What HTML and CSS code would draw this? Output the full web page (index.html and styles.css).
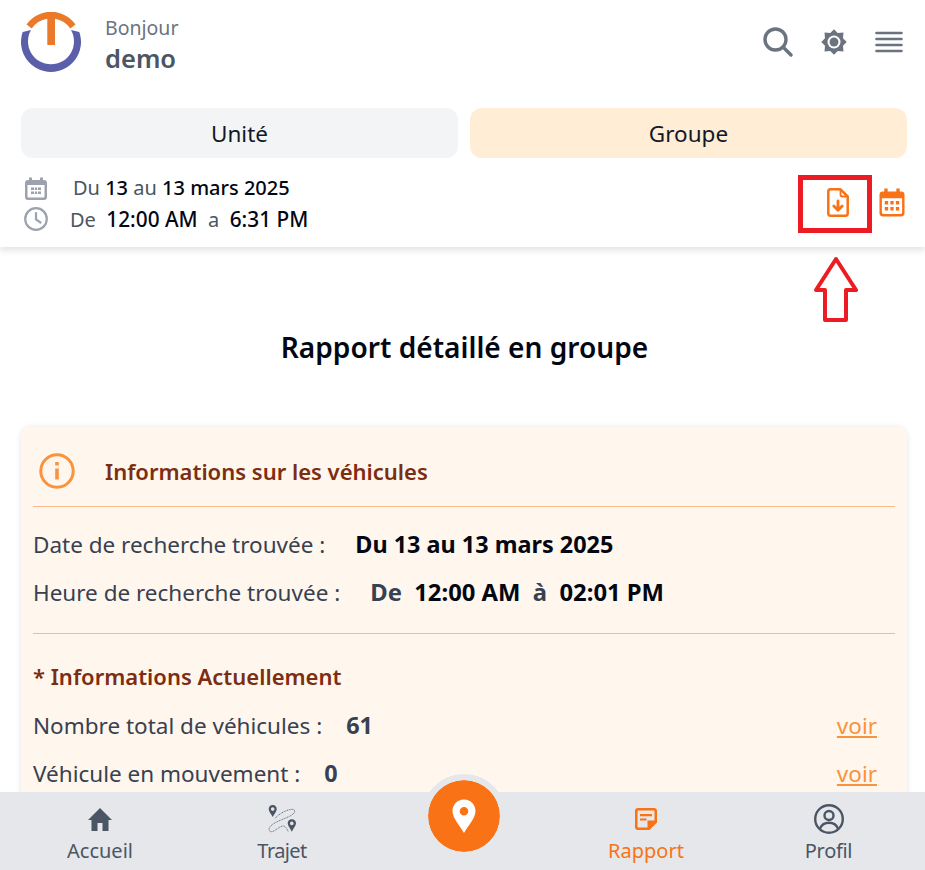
FILE: index.html
```html
<!DOCTYPE html>
<html lang="fr">
<head>
    <meta charset="UTF-8">
    <meta name="viewport" content="width=device-width, initial-scale=1.0">
    <title>Rapport</title>
    <link rel="stylesheet" href="styles.css">
</head>
<body>
    <header class="top">
        <div class="user">
            <svg class="logo" viewBox="0 0 60 60">
                <path d="M1.700 20 A30 30 0 1 0 58.300 20 L50 18 A23 23 0 1 1 10 18 Z" fill="#5b5fa9"/>
                <path d="M5.500 12.500 A30 30 0 0 1 54.500 12.500 L49.300 16.500 A23.500 23.500 0 0 0 34 6.800 V33 H26.300 V6.800 A23.500 23.500 0 0 0 10.700 16.500 Z" fill="#ea7a29"/>
            </svg>
            <div class="user-text">
                <span class="hello">Bonjour</span>
                <span class="name">demo</span>
            </div>
        </div>
        <div class="top-icons">
            <svg class="ic-search" viewBox="0 0 30 30" fill="none" stroke="#6b7280" stroke-width="3.400"><circle cx="12.500" cy="12.500" r="10.500"/><path d="M20 20 L28 28" stroke-linecap="round"/></svg>
            <svg class="ic-sun" viewBox="0 0 28 28">
                <path fill="#6b7280" d="M14 0.300 L18 4.300 L24.200 3.800 L23.700 10 L27.700 14 L23.700 18 L24.200 24.200 L18 23.700 L14 27.700 L10 23.700 L3.800 24.200 L4.300 18 L0.300 14 L4.300 10 L3.800 3.800 L10 4.300 Z"/>
                <circle cx="14" cy="14" r="7" fill="#fff"/><circle cx="14" cy="14" r="4.800" fill="#6b7280"/>
            </svg>
            <svg class="ic-menu" viewBox="0 0 28 22" fill="none" stroke="#6b7280" stroke-width="2.600" stroke-linecap="round"><path d="M1.500 2 H26.500 M1.500 8 H26.500 M1.500 14 H26.500 M1.500 20 H26.500"/></svg>
        </div>
    </header>

    <div class="tabs">
        <button class="tab">Unité</button>
        <button class="tab tab-on">Groupe</button>
    </div>

    <section class="range">
        <div class="range-text">
            <div class="range-line">
                <svg class="ic-small" viewBox="0 0 24 24"><path fill="#9ca3af" d="M5 1.500 H8 V4 H16 V1.500 H19 V4 H20 Q23 4 23 7 V21 Q23 24 20 24 H4 Q1 24 1 21 V7 Q1 4 4 4 H5 Z M3.500 9 V20.500 Q3.500 21.500 4.500 21.500 H19.500 Q20.500 21.500 20.500 20.500 V9 Z M7 11.500 H10 V14 H7 Z M10.800 11.500 H13.200 V14 H10.800 Z M14 11.500 H17 V14 H14 Z M7 15.500 H10 V18 H7 Z M10.800 15.500 H13.200 V18 H10.800 Z M14 15.500 H17 V18 H14 Z"/></svg>
                <span class="date-text"><span class="muted">Du</span> <b>13</b> <span class="muted">au</span> <b>13 mars 2025</b></span>
            </div>
            <div class="range-line">
                <svg class="ic-small" viewBox="0 0 24 24" fill="none" stroke="#9ca3af" stroke-width="2.200"><circle cx="12" cy="12" r="10.800"/><path d="M12 6 V12.500 L16.500 15.500" stroke-linecap="round"/></svg>
                <span class="time-text"><span class="muted">De</span>  <b>12:00 AM</b>  <span class="muted">a</span>  <b>6:31 PM</b></span>
            </div>
        </div>
        <div class="range-icons">
            <svg class="ic-file" viewBox="0 0 22 29" fill="none" stroke="#f97316" stroke-width="2.500" stroke-linejoin="round"><path d="M3.500 1.300 H13.500 L20.700 8.500 V25.500 Q20.700 27.700 18.500 27.700 H3.500 Q1.300 27.700 1.300 25.500 V3.500 Q1.300 1.300 3.500 1.300 Z"/><path d="M13.500 1.300 V6.500 Q13.500 8.500 15.500 8.500 H20.700" stroke-width="1.800"/><path d="M11 13 V22 M6.800 18 L11 22.300 L15.200 18" stroke-width="2.800" stroke-linecap="round"/></svg>
            <svg class="ic-cal" viewBox="0 0 27 30"><path fill="#f97316" d="M5.500 0.500 H9 V3.500 H18 V0.500 H21.500 V3.500 H23 Q26.500 3.500 26.500 7 V26 Q26.500 29.500 23 29.500 H4 Q0.500 29.500 0.500 26 V7 Q0.500 3.500 4 3.500 H5.500 Z M3 10.500 V25.500 Q3 27 4.500 27 H22.500 Q24 27 24 25.500 V10.500 Z M6 13.500 H9.500 V17 H6 Z M11.800 13.500 H15.200 V17 H11.800 Z M17.500 13.500 H21 V17 H17.500 Z M6 19.800 H9.500 V23.300 H6 Z M11.800 19.800 H15.200 V23.300 H11.800 Z M17.500 19.800 H21 V23.300 H17.500 Z"/></svg>
        </div>
    </section>

    <h1 class="title">Rapport détaillé en groupe</h1>

    <section class="card">
        <div class="card-head">
            <svg class="ic-info" viewBox="0 0 36 36" fill="none" stroke="#fb923c" stroke-width="3"><circle cx="18" cy="18" r="16.200"/><path d="M18 15.500 V26.500" stroke-width="3.600"/><path d="M18 9 V12.500" stroke-width="3.600"/></svg>
            <h2>Informations sur les véhicules</h2>
        </div>
        <div class="search-block">
            <p class="row"><span class="lbl">Date de recherche trouvée :</span><b class="val-date">Du 13 au 13 mars 2025</b></p>
            <p class="row"><span class="lbl">Heure de recherche trouvée :</span><b class="val-time"><span class="slate">De</span>  12:00 AM  <span class="slate">à</span>  02:01 PM</b></p>
        </div>
        <div class="now-block">
            <h3>* Informations Actuellement</h3>
            <p class="row row-link"><span class="lbl">Nombre total de véhicules :</span><b class="val-num">61</b><a class="see">voir</a></p>
            <p class="row row-link"><span class="lbl">Véhicule en mouvement :</span><b class="val-num">0</b><a class="see">voir</a></p>
        </div>
    </section>

    <!-- annotation -->
    <div class="mark-box"></div>
    <svg class="mark-arrow" viewBox="0 0 44 66" fill="#fff" stroke="#ed1c24" stroke-width="4" stroke-linejoin="round"><path d="M22 3 L42 34 H32 V64 H11 V34 H2 Z"/></svg>

    <nav class="bottom">
        <a class="nav-item">
            <svg class="ic-home" viewBox="0 0 24 23"><path fill="#4b5563" d="M12 0 L24 12 H20.500 V23 H14.500 V15 H9.500 V23 H3.500 V12 H0 Z"/></svg>
            <span>Accueil</span>
        </a>
        <a class="nav-item nav-tight">
            <svg class="ic-route" viewBox="0 0 28 28" fill="none">
                <path d="M7 13.300 C12 8 20 4 25.300 4.300 C27 5 27 7 26.300 7.700 C24 10.500 20 12 17 13.300 C12 15.500 5 18 2 21.700 C0.500 24 0.800 26.500 3 26.700 C7 27 11 21 15.300 21 C17.500 21 19 24 20.300 26.700" stroke="#6b7280" stroke-width="1" stroke-dasharray="1.100 0.700"/>
                <path fill="#4b5563" d="M4.700 0 C7.300 0 8.700 2 8.700 4 C8.700 6.500 6 9.500 4.700 12 C3.400 9.500 0.700 6.500 0.700 4 C0.700 2 2.100 0 4.700 0 Z M4.700 2.300 A1.800 1.800 0 1 0 4.700 5.900 A1.800 1.800 0 1 0 4.700 2.300 Z"/>
                <path fill="#4b5563" d="M23.800 14.300 C26.500 14.300 28 16.300 28 18.300 C28 20.800 25.100 23.800 23.800 26.700 C22.500 23.800 19.700 20.800 19.700 18.300 C19.700 16.300 21.200 14.300 23.800 14.300 Z M23.800 16.600 A1.800 1.800 0 1 0 23.800 20.200 A1.800 1.800 0 1 0 23.800 16.600 Z"/>
            </svg>
            <span>Trajet</span>
        </a>
        <div class="nav-gap">
            <a class="pin-btn">
                <svg viewBox="0 0 24 34"><path fill="#fff" d="M12 0.500 C19 0.500 23.500 6 23.500 12 C23.500 19 16 27 12 34 C8 27 0.500 19 0.500 12 C0.500 6 5 0.500 12 0.500 Z M12 8 A4.300 4.300 0 1 0 12 16.600 A4.300 4.300 0 1 0 12 8 Z"/></svg>
            </a>
        </div>
        <a class="nav-item nav-on">
            <svg class="ic-note" viewBox="0 0 24 24"><path fill="#f97316" d="M4 1 H20 Q23 1 23 4 V15.500 L15.500 23 H4 Q1 23 1 20 V4 Q1 1 4 1 Z M4.500 3.500 Q3.500 3.500 3.500 4.500 V19.500 Q3.500 20.500 4.500 20.500 H13.500 V13.500 H20.500 V4.500 Q20.500 3.500 19.500 3.500 Z M6 7 H18 V9.300 H6 Z M6 11.500 H12.500 V13.500 H6 Z"/></svg>
            <span>Rapport</span>
        </a>
        <a class="nav-item nav-last">
            <svg class="ic-user" viewBox="0 0 30 30" fill="none" stroke="#4b5563" stroke-width="2.400"><circle cx="15" cy="15" r="13.800"/><circle cx="15" cy="11.500" r="4.500"/><path d="M6 24.500 C8 20 11 18.800 15 18.800 C19 18.800 22 20 24 24.500"/></svg>
            <span>Profil</span>
        </a>
    </nav>
</body>
</html>
```

FILE: styles.css
```css
* {
    box-sizing: border-box;
}
html, body {
    height: 100%;
    overflow: hidden;
}
body {
    margin: 0;
    font-family: "Noto Sans", sans-serif;
    background-color: #ffffff;
    color: #374151;
}
.top {
    display: flex;
    justify-content: space-between;
    align-items: center;
    height: 108px;
    padding: 0 21px 24px 21px;
}
.user {
    display: flex;
    align-items: center;
    gap: 24px;
}
.logo {
    width: 60px;
    height: 60px;
}
.user-text {
    display: flex;
    flex-direction: column;
    padding-top: 4px;
}
.hello {
    font-size: 19.500px;
    line-height: 28px;
    color: #6b7280;
}
.name {
    font-size: 25.500px;
    line-height: 32px;
    font-weight: 600;
    color: #4b5563;
}
.top-icons {
    display: flex;
    align-items: center;
    gap: 28px;
    padding-right: 1px;
}
.ic-search {
    width: 30px;
    height: 30px;
}
.ic-sun {
    width: 26px;
    height: 26px;
}
.ic-menu {
    width: 28px;
    height: 22px;
}
.tabs {
    display: grid;
    grid-template-columns: 1fr 1fr;
    gap: 12px;
    padding: 0 18px 0 21px;
}
.tab {
    height: 50px;
    border: none;
    border-radius: 12px;
    background-color: #f3f4f6;
    color: #111827;
    font-family: inherit;
    font-size: 22.500px;
}
.tab-on {
    background-color: #ffedd5;
}
.range {
    display: flex;
    justify-content: space-between;
    height: 89px;
    padding: 14px 20px 0 24px;
    box-shadow: 0 4px 6px rgba(0, 0, 0, 0.1);
}
.range-line {
    display: flex;
    align-items: center;
    height: 31px;
    font-size: 20px;
    white-space: pre;
}
.range-line b {
    font-weight: 500;
    color: #030712;
}
.muted {
    color: #4b5563;
}
.ic-small {
    width: 24px;
    height: 24px;
}
.date-text {
    margin-left: 25px;
}
.time-text {
    margin-left: 22px;
}
.time-text b {
    font-size: 20.800px;
}
.range-icons {
    display: flex;
    align-items: center;
    gap: 30px;
    height: 60px;
}
.ic-file {
    width: 22px;
    height: 29px;
}
.ic-cal {
    width: 26px;
    height: 29px;
}
.title {
    margin: 0;
    padding: 80px 0 0 4px;
    height: 180px;
    text-align: center;
    font-size: 28.100px;
    line-height: 40px;
    font-weight: 600;
    color: #030712;
}
.card {
    margin: 0 18px 0 21px;
    padding: 0 12px;
    height: 420px;
    background-color: #fff7ed;
    border-radius: 10px;
    box-shadow: 0 0 6px rgba(0, 0, 0, 0.1);
}
.card-head {
    display: flex;
    align-items: center;
    gap: 30px;
    height: 80px;
    padding: 8px 0 0 6px;
    border-bottom: 1px solid #fdba8c;
}
.ic-info {
    width: 36px;
    height: 36px;
}
.card-head h2 {
    margin: 1px 0 0 0;
    font-size: 22px;
    font-weight: 600;
    color: #7c2d12;
}
.search-block {
    height: 127px;
    padding-top: 13px;
    border-bottom: 1px solid #fdba8c;
}
.row {
    display: flex;
    align-items: center;
    height: 48px;
    margin: 0;
    font-size: 22.500px;
    white-space: pre;
}
.lbl {
    color: #374151;
}
.row b {
    font-size: 23.400px;
    font-weight: 700;
    color: #030712;
}
.val-date {
    margin-left: 30px;
}
.row b.val-time {
    margin-left: 30px;
    font-size: 23.800px;
}
.slate {
    color: #374151;
}
.now-block {
    padding-top: 18px;
}
.now-block h3 {
    margin: 0;
    height: 49px;
    line-height: 48px;
    font-size: 22px;
    font-weight: 600;
    color: #7c2d12;
}
.row b.val-num {
    margin-left: 24px;
    color: #374151;
}
.see {
    margin-left: auto;
    margin-right: 18px;
    color: #fb923c;
    text-decoration: underline;
}
.bottom {
    position: fixed;
    left: 0;
    right: 0;
    bottom: 0;
    height: 78px;
    display: grid;
    grid-template-columns: 200px 164px 200px 164px 197px;
    background-color: #e5e7eb;
}
.nav-item {
    display: flex;
    flex-direction: column;
    align-items: center;
    justify-content: flex-end;
    padding-bottom: 4px;
    font-size: 20px;
    line-height: 30px;
    color: #4b5563;
}
.nav-on {
    color: #f97316;
}
.nav-tight {
    letter-spacing: -0.600px;
}
.nav-last {
    padding-left: 4px;
    letter-spacing: -0.300px;
}
.ic-home {
    width: 24px;
    height: 23px;
    margin-bottom: 5px;
}
.ic-route {
    width: 28px;
    height: 28px;
    margin-bottom: 3px;
}
.ic-note {
    width: 24px;
    height: 24px;
    margin-bottom: 5px;
}
.ic-user {
    width: 30px;
    height: 30px;
    margin-bottom: 2px;
}
.nav-gap {
    position: relative;
}
.pin-btn {
    position: absolute;
    left: 50%;
    top: -18px;
    transform: translateX(-50%);
    width: 84px;
    height: 84px;
    display: flex;
    align-items: center;
    justify-content: center;
    border: 6px solid #e5e7eb;
    border-radius: 50%;
    background-color: #f97316;
    background-clip: padding-box;
}
.pin-btn svg {
    width: 24px;
    height: 34px;
}
.mark-box {
    position: absolute;
    left: 798px;
    top: 175px;
    width: 74px;
    height: 58px;
    border: 5px solid #ed1c24;
}
.mark-arrow {
    position: absolute;
    left: 814px;
    top: 256px;
    width: 44px;
    height: 66px;
}
```
